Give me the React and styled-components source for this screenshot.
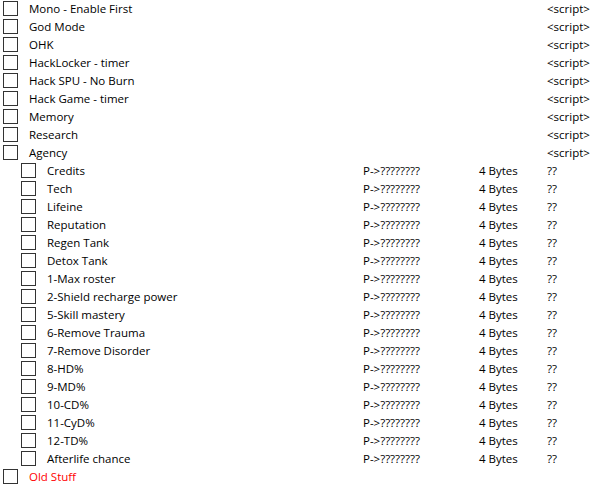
import React from "react";
import styled, { createGlobalStyle } from "styled-components";

const Global = createGlobalStyle`
  html, body { margin: 0; padding: 0; background: #fff; }
  body { font-family: "Open Sans", "Noto Sans", sans-serif; font-size: 11.5px; color: #000; }
`;

const List = styled.div`
  display: flex;
  flex-direction: column;
  width: 596px;
  margin-top: -1px;
`;

const Row = styled.div`
  display: grid;
  grid-template-columns: ${(p) => 360 - p.$indent}px 116px 68px 1fr;
  height: 18px;
  align-items: center;
  padding-left: ${(p) => 3 + p.$indent}px;
  box-sizing: border-box;
  white-space: nowrap;
`;

const NameCell = styled.div`
  display: flex;
  align-items: center;
  gap: 11px;
  color: ${(p) => (p.$red ? "#ff0000" : "#000")};
`;

const Box = styled.span`
  width: 15px;
  height: 15px;
  box-sizing: border-box;
  border: 1px solid #333;
  background: #fff;
  flex: none;
  margin-top: 1px;
`;

const Cell = styled.div`
  color: #000;
`;

const top = [
  "Mono - Enable First",
  "God Mode",
  "OHK",
  "HackLocker - timer",
  "Hack SPU - No Burn",
  "Hack Game - timer",
  "Memory",
  "Research",
  "Agency",
];

const sub = [
  "Credits",
  "Tech",
  "Lifeine",
  "Reputation",
  "Regen Tank",
  "Detox Tank",
  "1-Max roster",
  "2-Shield recharge power",
  "5-Skill mastery",
  "6-Remove Trauma",
  "7-Remove Disorder",
  "8-HD%",
  "9-MD%",
  "10-CD%",
  "11-CyD%",
  "12-TD%",
  "Afterlife chance",
];

export default function App() {
  return (
    <>
      <Global />
      <List>
        {top.map((n) => (
          <Row key={n} $indent={0}>
            <NameCell>
              <Box />
              {n}
            </NameCell>
            <Cell />
            <Cell />
            <Cell>&lt;script&gt;</Cell>
          </Row>
        ))}
        {sub.map((n) => (
          <Row key={n} $indent={18}>
            <NameCell>
              <Box />
              {n}
            </NameCell>
            <Cell>P-&gt;????????</Cell>
            <Cell>4 Bytes</Cell>
            <Cell>??</Cell>
          </Row>
        ))}
        <Row $indent={0}>
          <NameCell $red>
            <Box />
            Old Stuff
          </NameCell>
          <Cell />
          <Cell />
          <Cell />
        </Row>
      </List>
    </>
  );
}
